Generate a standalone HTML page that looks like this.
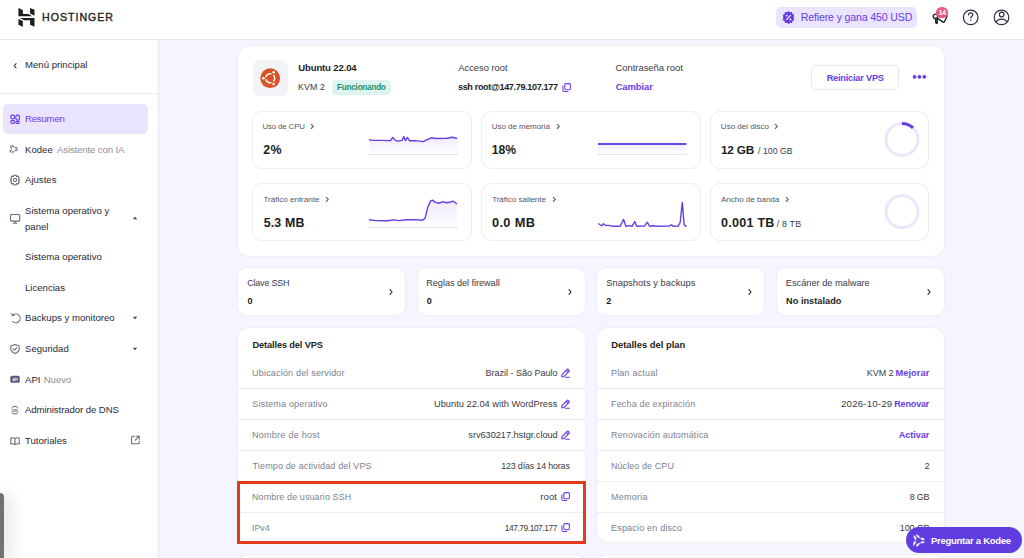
<!DOCTYPE html>
<html><head><meta charset="utf-8">
<style>
*{margin:0;padding:0;box-sizing:border-box}
html,body{width:1024px;height:558px;overflow:hidden;background:#f4f5ff;font-family:"Liberation Sans",sans-serif;color:#1d1e20}
.a{position:absolute;white-space:nowrap}
.ic{position:absolute}
#hdr{position:absolute;left:0;top:0;width:1024px;height:40px;background:#fff;border-bottom:1px solid #e9e9ef}
#side{position:absolute;left:0;top:40px;width:159px;height:518px;background:#fff;border-right:1px solid #e6e6f2}
.si{position:absolute;left:25px;font-size:9.6px;color:#2b2a36;line-height:12px;white-space:nowrap}
.card{position:absolute;background:#fff;border-radius:12px;border:1px solid #eeeef6}
.mc{position:absolute;background:#fff;border:1px solid #ededf2;border-radius:10px}
</style></head><body>
<div id="hdr"></div>
<svg class="ic" style="left:0;top:0" width="40" height="40" viewBox="0 0 40 40">
    <polygon fill="#1d1e20" points="18.4,8 22.85,10.06 22.85,14.02 28.68,14.02 32.17,16.35 18.4,16.35"/>
    <polygon fill="#1d1e20" points="30.08,8 34.5,9.82 34.5,15.65 30.08,13.55"/>
    <polygon fill="#1d1e20" points="20.06,17.98 34.5,17.98 34.5,26.83 30.08,24.74 30.08,20.31 24.02,20.31"/>
    <polygon fill="#1d1e20" points="18.43,18.91 22.85,21 22.85,26.83 18.43,24.74"/>
  </svg>
<div class="a" id="logo" style="left:41.8px;top:11.1px;font-size:11.8px;line-height:12px;letter-spacing:1.1px;color:#1d1e20;-webkit-text-stroke:0.4px #1d1e20;transform:scaleX(0.9);transform-origin:0 0">HOSTINGER</div>
<div class="a" style="left:776px;top:7px;width:141px;height:20.5px;background:#ebe4ff;border-radius:5px"></div>
<svg class="ic" style="left:781px;top:10px" width="15" height="15" viewBox="0 0 15 15">
    <path fill="#673de6" d="M7.5 1 L9 2.3 L11 2 L11.5 4 L13.3 5 L12.6 7.5 L13.3 10 L11.5 11 L11 13 L9 12.7 L7.5 14 L6 12.7 L4 13 L3.5 11 L1.7 10 L2.4 7.5 L1.7 5 L3.5 4 L4 2 L6 2.3 Z"/>
    <path stroke="#fff" stroke-width="1.1" d="M5.3 9.8 L9.7 5.2"/>
    <circle cx="5.6" cy="5.6" r="0.9" fill="#fff"/><circle cx="9.4" cy="9.4" r="0.9" fill="#fff"/>
  </svg>
<div class="a" style="left:800.85px;top:9.80px;font-size:10.65px;line-height:15px;letter-spacing:-0.184px;color:#673de6;font-weight:normal;">Refiere y gana 450 USD</div>
<svg class="ic" style="left:928px;top:5px" width="22" height="22" viewBox="928 5 22 22">
    <g fill="none" stroke="#26252f" stroke-width="1.45" stroke-linejoin="round" stroke-linecap="round">
    <rect x="933.3" y="14.1" width="4.3" height="4.4" rx="2"/>
    <path d="M937.6 14.6 L946.6 10.8 L946.8 17 L944.2 22 Q943.8 22.6 943.1 22.2 L937.6 18.3"/>
    <path d="M935.6 18.6 L935.8 22.6 Q935.9 23.4 936.6 23.4 Q937.3 23.4 937.3 22.6 L937.2 18.8"/>
    </g>
  </svg>
  <div class="a" style="left:936.3px;top:6.7px;width:11.8px;height:11.8px;border-radius:6px;background:#ea5a84"></div>
  <div class="a" style="left:936.3px;top:6.7px;width:11.8px;height:11.8px;color:#fff;font-size:6.8px;font-weight:bold;text-align:center;line-height:12px;letter-spacing:-0.3px">14</div>
  <svg class="ic" style="left:960px;top:6px" width="22" height="22" viewBox="960 6 22 22">
    <circle cx="970.7" cy="17.4" r="7.3" fill="none" stroke="#2f2e45" stroke-width="1.2"/>
    <path fill="none" stroke="#2f2e45" stroke-width="1.2" stroke-linecap="round" d="M968.6 15 C968.6 13.6 969.5 12.9 970.7 12.9 C971.9 12.9 972.8 13.7 972.8 14.8 C972.8 16.2 970.8 16.3 970.8 18"/>
    <circle cx="970.8" cy="20.3" r="0.75" fill="#2f2e45"/>
  </svg>
  <svg class="ic" style="left:991px;top:6px" width="22" height="22" viewBox="991 6 22 22">
    <defs><clipPath id="acc"><circle cx="1001.5" cy="17.4" r="7.3"/></clipPath></defs>
    <circle cx="1001.5" cy="17.4" r="7.3" fill="none" stroke="#2f2e45" stroke-width="1.2"/>
    <circle cx="1001.7" cy="14.5" r="2.3" fill="none" stroke="#2f2e45" stroke-width="1.2"/>
    <path clip-path="url(#acc)" fill="none" stroke="#2f2e45" stroke-width="1.2" d="M995.5 23.5 C996.5 20.5 999 19.1 1001.6 19.1 C1004.2 19.1 1006.7 20.5 1007.7 23.5"/>
  </svg>
<div id="side">
  <svg class="ic" style="left:12px;top:21.5px" width="6" height="8" viewBox="0 0 6 8"><path fill="none" stroke="#36344d" stroke-width="1.05" stroke-linecap="round" stroke-linejoin="round" d="M4.1 1.6 L2.2 3.8 L4.1 6"/></svg>
  <div class="si" style="top:19px">Menú principal</div>
  <div class="a" style="left:0;top:53px;width:158px;height:1px;background:#ececf1"></div>
  <div class="a" style="left:3px;top:64px;width:145px;height:30px;background:#ebe4ff;border-radius:5px"></div>
  <svg class="ic" style="left:0;top:64px" width="30" height="30" viewBox="0 104 30 30">
    <g fill="none" stroke="#673de6" stroke-width="1.15">
    <rect x="10.8" y="115.1" width="3.7" height="3.7" rx="1.3"/>
    <rect x="15.9" y="115.1" width="3.5" height="5" rx="1.3"/>
    <rect x="10.8" y="120.3" width="3.7" height="3.1" rx="1.5"/>
    <rect x="15.9" y="121.5" width="3.5" height="1.9" rx="0.9"/>
    </g>
  </svg>
  <div class="si" style="top:73px;color:#673de6;letter-spacing:-0.2px">Resumen</div>

  <!-- kodee -->
  <svg class="ic" style="left:0;top:104px" width="30" height="30" viewBox="0 144 30 30">
    <path transform="translate(10 144.7) scale(0.7) translate(-913.6 -534.3)" fill="#66667a" stroke="#66667a" stroke-width="0.4" d="M913.60 535.40 Q913.57 538.40 915.90 540.30 Q917.01 536.79 913.60 535.40Z M915.90 540.80 Q912.49 542.19 913.60 545.70 Q915.93 543.80 915.90 540.80Z M916.20 534.30 Q916.36 537.94 920.00 538.00 Q919.01 535.22 916.20 534.30Z M920.30 538.20 Q921.97 541.04 924.70 539.20 Q922.81 537.33 920.30 538.20Z M916.20 546.80 Q919.01 545.88 920.00 543.10 Q916.36 543.16 916.20 546.80Z M920.30 542.90 Q922.81 543.77 924.70 541.90 Q921.97 540.06 920.30 542.90Z"/>
  </svg>
  <div class="si" style="top:104px">Kodee <span style="color:#8e8fa1;margin-left:1.5px;letter-spacing:-0.12px">Asistente con IA</span></div>
  <!-- gear -->
  <svg class="ic" style="left:0;top:125px" width="30" height="30" viewBox="0 165 30 30">
    <g fill="none" stroke="#66667a" stroke-width="1.05" stroke-linejoin="round">
    <path d="M13.9 175.3 L16.1 175.3 L16.6 176.7 L17.9 176.1 L19.2 177.8 L18.3 178.9 L19.6 180.1 L18.3 181.3 L19.2 182.4 L17.9 184.1 L16.6 183.5 L16.1 184.9 L13.9 184.9 L13.4 183.5 L12.1 184.1 L10.8 182.4 L11.7 181.3 L10.4 180.1 L11.7 178.9 L10.8 177.8 L12.1 176.1 L13.4 176.7 Z"/>
    <circle cx="15" cy="180.1" r="1.6"/>
    </g>
  </svg>
  <div class="si" style="top:134px">Ajustes</div>
  <!-- monitor -->
  <svg class="ic" style="left:0;top:165px" width="30" height="30" viewBox="0 205 30 30">
    <g fill="none" stroke="#66667a" stroke-width="1.05">
    <rect x="10.5" y="214.5" width="9.2" height="6.6" rx="1"/>
    <path d="M15.1 221.2 L15.1 223 M12.8 223.2 L17.4 223.2"/>
    </g>
  </svg>
  <div class="si" style="top:163.3px;line-height:15.3px">Sistema operativo y<br>panel</div>
  <svg class="ic" style="left:132px;top:176px" width="6" height="4" viewBox="0 0 6 4"><path fill="#4a4a5c" d="M0.7 3.3 L3 0.7 L5.3 3.3 Z"/></svg>
  <div class="si" style="top:211px">Sistema operativo</div>
  <div class="si" style="top:242px">Licencias</div>
  <!-- backups -->
  <svg class="ic" style="left:0;top:265px" width="30" height="30" viewBox="0 305 30 30">
    <g fill="none" stroke="#66667a" stroke-width="1.05" stroke-linecap="round" stroke-linejoin="round">
    <path d="M12.6 315.2 A4.4 4.4 0 1 1 12.8 321.6"/>
    <path d="M11.6 313.6 L12.4 315.6 L14.5 315.2"/>
    </g>
  </svg>
  <div class="si" style="top:272px">Backups y monitoreo</div>
  <svg class="ic" style="left:132px;top:276px" width="6" height="4" viewBox="0 0 6 4"><path fill="#4a4a5c" d="M0.7 0.7 L3 3.3 L5.3 0.7 Z"/></svg>
  <!-- shield -->
  <svg class="ic" style="left:0;top:295px" width="30" height="30" viewBox="0 335 30 30">
    <g fill="none" stroke="#66667a" stroke-width="1.05" stroke-linejoin="round" stroke-linecap="round">
    <path d="M15 344.4 L19.2 345.9 L19.2 348.6 C19.2 351 17.4 352.6 15 353.4 C12.6 352.6 10.8 351 10.8 348.6 L10.8 345.9 Z"/>
    <path d="M13.2 348.9 L14.5 350.1 L16.8 347.6"/>
    </g>
  </svg>
  <div class="si" style="top:303px">Seguridad</div>
  <svg class="ic" style="left:132px;top:307px" width="6" height="4" viewBox="0 0 6 4"><path fill="#4a4a5c" d="M0.7 0.7 L3 3.3 L5.3 0.7 Z"/></svg>
  <!-- api -->
  <svg class="ic" style="left:0;top:325px" width="30" height="30" viewBox="0 365 30 30">
    <rect x="10.3" y="375.8" width="9.5" height="7" rx="1.6" fill="#5e5f76"/>
    <text x="15.05" y="380.6" font-size="3.2" font-family="Liberation Sans" font-weight="bold" fill="#fff" text-anchor="middle">API</text>
  </svg>
  <div class="si" style="top:334px">API <span style="color:#8b8c9c;margin-left:0.5px">Nuevo</span></div>
  <!-- dns -->
  <svg class="ic" style="left:0;top:355px" width="30" height="30" viewBox="0 395 30 30">
    <g fill="none" stroke="#66667a" stroke-width="1">
    <path d="M11.6 408.2 A3.9 3.9 0 0 1 18.2 408.2 M11.6 412.2 A3.9 3.9 0 0 0 18.2 412.2"/>
    </g>
    <text x="14.9" y="411.6" font-size="3" font-family="Liberation Sans" font-weight="bold" fill="#66667a" text-anchor="middle">DNS</text>
  </svg>
  <div class="si" style="top:364px;letter-spacing:-0.08px">Administrador de DNS</div>
  <!-- book -->
  <svg class="ic" style="left:0;top:385px" width="30" height="30" viewBox="0 425 30 30">
    <path fill="none" stroke="#66667a" stroke-width="1.05" stroke-linejoin="round" d="M15 438.6 C13.8 437.8 12.2 437.6 10.8 437.9 L10.8 444 C12.2 443.7 13.8 443.9 15 444.6 C16.2 443.9 17.8 443.7 19.2 444 L19.2 437.9 C17.8 437.6 16.2 437.8 15 438.6 Z M15 438.6 L15 444.6"/>
  </svg>
  <div class="si" style="top:395px">Tutoriales</div>
  <svg class="ic" style="left:125px;top:390px" width="20" height="20" viewBox="125 430 20 20">
    <path fill="none" stroke="#66667a" stroke-width="1.05" stroke-linecap="round" stroke-linejoin="round" d="M134.3 436.2 L132.6 436.2 Q131.6 436.2 131.6 437.2 L131.6 442.8 Q131.6 443.8 132.6 443.8 L138.2 443.8 Q139.2 443.8 139.2 442.8 L139.2 441.1 M136.1 436.2 L139.2 436.2 L139.2 439.3 M139.2 436.2 L135.3 440.1"/>
  </svg>
</div>
<div class="a" style="left:0;top:493px;width:4px;height:65px;background:#727272;border-radius:0 5px 0 0;box-shadow:3px 2px 16px rgba(0,0,0,0.32)"></div>



<div class="card" style="left:237px;top:44.5px;width:708px;height:212px"></div>
<div class="a" style="left:252.5px;top:59.5px;width:35.5px;height:36px;background:#f2f3f6;border-radius:7px"></div>
<svg class="ic" style="left:259px;top:66.5px" width="22" height="22" viewBox="0 0 22 22">
  <circle cx="11.2" cy="11.2" r="9.9" fill="#dc5126"/>
  <circle cx="11.2" cy="11.2" r="4.5" fill="none" stroke="#fff" stroke-width="1.45" stroke-dasharray="3.5 2.1 7.1 2.1 7.1 2.1 3.6 0"/>
  <circle cx="4.4" cy="11.2" r="1.3" fill="#fff"/>
  <circle cx="14.6" cy="5.3" r="1.3" fill="#fff"/>
  <circle cx="14.6" cy="17.1" r="1.3" fill="#fff"/>
</svg>
<div class="a" style="left:298.22px;top:60.90px;font-size:9.59px;line-height:13px;letter-spacing:-0.151px;color:#1d1e20;font-weight:bold;">Ubuntu 22.04</div>
<div class="a" style="left:298.10px;top:80.91px;font-size:8.80px;line-height:12px;letter-spacing:0.075px;color:#3a3a44;font-weight:normal;">KVM 2</div>
<div class="a" style="left:332.3px;top:79.5px;width:58.7px;height:15.2px;background:#def4f0;border-radius:4px"></div>
<div class="a" style="left:337.11px;top:81.91px;font-size:8.16px;line-height:11px;letter-spacing:-0.245px;color:#1f8f6c;font-weight:bold;">Funcionando</div>
<div class="a" style="left:458.25px;top:60.92px;font-size:9.40px;line-height:13px;letter-spacing:-0.013px;color:#3a3a44;font-weight:normal;">Acceso root</div>
<div class="a" style="left:457.98px;top:80.91px;font-size:9.07px;line-height:13px;letter-spacing:-0.346px;color:#1d1e20;font-weight:bold;">ssh root@147.79.107.177</div>
<svg class="ic" style="left:561.5px;top:83px" width="9" height="9" viewBox="0 0 9 9">
  <rect x="2.8" y="0.6" width="5.6" height="6.2" rx="1.2" fill="none" stroke="#673de6" stroke-width="1.05"/>
  <path fill="none" stroke="#673de6" stroke-width="1.05" d="M0.9 2.6 L0.9 7 Q0.9 8.4 2.3 8.4 L6.2 8.4"/>
</svg>
<div class="a" style="left:615.53px;top:60.91px;font-size:9.48px;line-height:13px;letter-spacing:-0.044px;color:#3a3a44;font-weight:normal;">Contraseña root</div>
<div class="a" style="left:615.63px;top:80.91px;font-size:9.37px;line-height:13px;letter-spacing:-0.036px;color:#673de6;font-weight:bold;">Cambiar</div>
<div class="a" style="left:811.3px;top:65.3px;width:87.6px;height:25.2px;border:1px solid #e6e6ee;border-radius:5px"></div>
<div class="a" style="left:826.64px;top:71.90px;font-size:9.27px;line-height:13px;letter-spacing:-0.238px;color:#673de6;font-weight:bold;">Reiniciar VPS</div>
<svg class="ic" style="left:911px;top:74px" width="17" height="6" viewBox="0 0 17 6">
  <circle cx="3.6" cy="2.8" r="1.9" fill="#673de6"/><circle cx="8.45" cy="2.8" r="1.9" fill="#673de6"/><circle cx="13.3" cy="2.8" r="1.9" fill="#673de6"/>
</svg>
<div class="mc" style="left:252px;top:110.8px;width:220px;height:57.8px"></div>
<div class="mc" style="left:252px;top:183.2px;width:220px;height:58.2px"></div>
<div class="mc" style="left:481.3px;top:110.8px;width:219.5px;height:57.8px"></div>
<div class="mc" style="left:481.3px;top:183.2px;width:219.5px;height:58.2px"></div>
<div class="mc" style="left:710.3px;top:110.8px;width:219.2px;height:57.8px"></div>
<div class="mc" style="left:710.3px;top:183.2px;width:219.2px;height:58.2px"></div>
<div class="a" style="left:262.55px;top:121.20px;font-size:7.87px;line-height:11px;letter-spacing:-0.147px;color:#55555f;font-weight:normal;">Uso de CPU</div>
<svg class="ic" style="left:310px;top:122.9px" width="5" height="7" viewBox="0 0 5 7"><path fill="none" stroke="#5f6072" stroke-width="1.1" stroke-linecap="round" stroke-linejoin="round" d="M1.3 1.3 L3.4 3.4 L1.3 5.5"/></svg>
<div class="a" style="left:491.74px;top:121.21px;font-size:8.03px;line-height:11px;letter-spacing:-0.050px;color:#55555f;font-weight:normal;">Uso de memoria</div>
<svg class="ic" style="left:555.5px;top:122.9px" width="5" height="7" viewBox="0 0 5 7"><path fill="none" stroke="#5f6072" stroke-width="1.1" stroke-linecap="round" stroke-linejoin="round" d="M1.3 1.3 L3.4 3.4 L1.3 5.5"/></svg>
<div class="a" style="left:720.84px;top:121.21px;font-size:8.07px;line-height:11px;letter-spacing:-0.023px;color:#55555f;font-weight:normal;">Uso del disco</div>
<svg class="ic" style="left:774.2px;top:122.9px" width="5" height="7" viewBox="0 0 5 7"><path fill="none" stroke="#5f6072" stroke-width="1.1" stroke-linecap="round" stroke-linejoin="round" d="M1.3 1.3 L3.4 3.4 L1.3 5.5"/></svg>
<div class="a" style="left:263.44px;top:194.01px;font-size:8.08px;line-height:11px;letter-spacing:-0.016px;color:#55555f;font-weight:normal;">Tráfico entrante</div>
<svg class="ic" style="left:325px;top:195.7px" width="5" height="7" viewBox="0 0 5 7"><path fill="none" stroke="#5f6072" stroke-width="1.1" stroke-linecap="round" stroke-linejoin="round" d="M1.3 1.3 L3.4 3.4 L1.3 5.5"/></svg>
<div class="a" style="left:492.14px;top:194.01px;font-size:8.06px;line-height:11px;letter-spacing:-0.026px;color:#55555f;font-weight:normal;">Tráfico saliente</div>
<svg class="ic" style="left:551.5px;top:195.7px" width="5" height="7" viewBox="0 0 5 7"><path fill="none" stroke="#5f6072" stroke-width="1.1" stroke-linecap="round" stroke-linejoin="round" d="M1.3 1.3 L3.4 3.4 L1.3 5.5"/></svg>
<div class="a" style="left:720.90px;top:194.01px;font-size:8.07px;line-height:11px;letter-spacing:-0.025px;color:#55555f;font-weight:normal;">Ancho de banda</div>
<svg class="ic" style="left:785.3px;top:195.7px" width="5" height="7" viewBox="0 0 5 7"><path fill="none" stroke="#5f6072" stroke-width="1.1" stroke-linecap="round" stroke-linejoin="round" d="M1.3 1.3 L3.4 3.4 L1.3 5.5"/></svg>
<div class="a" style="left:263.23px;top:141.71px;font-size:12.43px;line-height:17px;letter-spacing:0.352px;color:#1d1e20;font-weight:bold;">2%</div>
<div class="a" style="left:491.77px;top:141.71px;font-size:12.17px;line-height:17px;letter-spacing:-0.000px;color:#1d1e20;font-weight:bold;">18%</div>
<div class="a" style="left:720.99px;top:141.71px;font-size:11.83px;line-height:17px;letter-spacing:-0.243px;color:#1d1e20;font-weight:bold;">12 GB</div>
<div class="a" style="left:758.00px;top:144.70px;font-size:8.67px;line-height:12px;letter-spacing:0.068px;color:#3a3a44;font-weight:normal;">/ 100 GB</div>
<div class="a" style="left:263.73px;top:214.71px;font-size:12.40px;line-height:17px;letter-spacing:0.144px;color:#1d1e20;font-weight:bold;">5.3 MB</div>
<div class="a" style="left:491.92px;top:213.70px;font-size:12.78px;line-height:18px;letter-spacing:0.384px;color:#1d1e20;font-weight:bold;">0.0 MB</div>
<div class="a" style="left:721.12px;top:213.71px;font-size:12.57px;line-height:18px;letter-spacing:0.229px;color:#1d1e20;font-weight:bold;">0.001 TB</div>
<div class="a" style="left:776.80px;top:217.70px;font-size:8.87px;line-height:12px;letter-spacing:0.169px;color:#3a3a44;font-weight:normal;">/ 8 TB</div>
<svg class="ic" style="left:0;top:0" width="1024" height="558" viewBox="0 0 1024 558">
  <defs>
    <linearGradient id="gf" x1="0" y1="0" x2="0" y2="1">
      <stop offset="0" stop-color="#eeeafd"/><stop offset="1" stop-color="#fefeff"/>
    </linearGradient>
  </defs>
  <!-- CPU -->
  <path fill="url(#gf)" d="M369 139.6 L372.3 140.4 L380.5 140.4 L390.3 140.6 L392.8 137.5 L395.4 140.4 L397.4 141.1 L402 140.4 L403.9 136.5 L405.4 140.7 L407.4 137.3 L409.4 140.7 L415.4 140.6 L423.1 141.6 L426.7 139.9 L431.3 137.8 L435.9 138.5 L447.2 138.3 L452.3 137.3 L457.2 138.5 L457.2 154 L369 154 Z"/>
  <path fill="none" stroke="#673de6" stroke-width="1.4" stroke-linejoin="round" d="M369 139.6 L372.3 140.4 L380.5 140.4 L390.3 140.6 L392.8 137.5 L395.4 140.4 L397.4 141.1 L402 140.4 L403.9 136.5 L405.4 140.7 L407.4 137.3 L409.4 140.7 L415.4 140.6 L423.1 141.6 L426.7 139.9 L431.3 137.8 L435.9 138.5 L447.2 138.3 L452.3 137.3 L457.2 138.5"/>
  <path stroke="#e2e4f0" stroke-width="1" d="M368 154.5 L458 154.5"/>
  <!-- MEM -->
  <path fill="url(#gf)" d="M598 144 L686.5 144 L686.5 154 L598 154 Z"/>
  <path fill="none" stroke="#6a45e6" stroke-width="1.8" d="M598 144 L686.5 144"/>
  <path stroke="#e2e4f0" stroke-width="1" d="M597.5 154.5 L687 154.5"/>
  <!-- TRAFFIC IN -->
  <path fill="url(#gf)" d="M369 219.8 L376.4 220.6 L387.7 220.8 L393.8 219.9 L399 220.6 L406.1 219.8 L415.4 219.6 L422.5 220.3 L425.1 218.1 L427.7 207.3 L430.8 200.6 L432.8 200.3 L435.4 202.4 L439.5 203.2 L442.5 201.7 L446.6 202.7 L450.8 202 L453.3 201.2 L456.9 204 L456.9 227 L369 227 Z"/>
  <path fill="none" stroke="#673de6" stroke-width="1.4" stroke-linejoin="round" d="M369 219.8 L376.4 220.6 L387.7 220.8 L393.8 219.9 L399 220.6 L406.1 219.8 L415.4 219.6 L422.5 220.3 L425.1 218.1 L427.7 207.3 L430.8 200.6 L432.8 200.3 L435.4 202.4 L439.5 203.2 L442.5 201.7 L446.6 202.7 L450.8 202 L453.3 201.2 L456.9 204"/>
  <path stroke="#e2e4f0" stroke-width="1" d="M368 227.5 L458 227.5"/>
  <!-- TRAFFIC OUT -->
  <path fill="none" stroke="#673de6" stroke-width="1.4" stroke-linejoin="round" d="M598.2 223.5 L601.5 225.8 L603.5 223.7 L605.4 225.2 L610.5 225.6 L612.6 226.3 L620.2 226.3 L623.6 219.4 L625.9 226.3 L629.5 225.6 L632 226.3 L634.8 221.5 L636.7 226.3 L644.3 226.1 L647.4 222.2 L649.5 226.3 L652.6 225.8 L656.7 226.3 L669 226.1 L671.3 224.9 L673.6 226.3 L678.2 226.1 L680.2 222.2 L682.3 202.4 L684.1 224.7 L686.4 226.6"/>
  <!-- donuts -->
  <circle cx="902" cy="139.5" r="16" fill="none" stroke="#ebe6fc" stroke-width="3"/>
  <circle cx="902" cy="139.5" r="16" fill="none" stroke="#673de6" stroke-width="3" stroke-dasharray="12.1 100" transform="rotate(-90 902 139.5)"/>
  <circle cx="902" cy="211.7" r="16" fill="none" stroke="#ebe6fc" stroke-width="3"/>
</svg>
<div class="card" style="left:237px;top:267.3px;width:169px;height:48.4px;border-radius:10px"></div>
<div class="card" style="left:417px;top:267.3px;width:169px;height:48.4px;border-radius:10px"></div>
<div class="card" style="left:596.3px;top:267.3px;width:169px;height:48.4px;border-radius:10px"></div>
<div class="card" style="left:776px;top:267.3px;width:169px;height:48.4px;border-radius:10px"></div>
<div class="a" style="left:247.25px;top:276.90px;font-size:8.96px;line-height:13px;letter-spacing:-0.189px;color:#3a3a44;font-weight:normal;">Clave SSH</div>
<div class="a" style="left:247.43px;top:294.81px;font-size:9.13px;line-height:13px;letter-spacing:1.226px;color:#1d1e20;font-weight:bold;">0</div>
<div class="a" style="left:426.27px;top:276.90px;font-size:9.17px;line-height:13px;letter-spacing:-0.049px;color:#3a3a44;font-weight:normal;">Reglas del firewall</div>
<div class="a" style="left:426.73px;top:294.81px;font-size:9.13px;line-height:13px;letter-spacing:1.226px;color:#1d1e20;font-weight:bold;">0</div>
<div class="a" style="left:606.23px;top:276.91px;font-size:9.33px;line-height:13px;letter-spacing:0.030px;color:#3a3a44;font-weight:normal;">Snapshots y backups</div>
<div class="a" style="left:606.33px;top:294.81px;font-size:9.13px;line-height:13px;letter-spacing:1.026px;color:#1d1e20;font-weight:bold;">2</div>
<div class="a" style="left:785.86px;top:276.91px;font-size:9.24px;line-height:13px;letter-spacing:-0.020px;color:#3a3a44;font-weight:normal;">Escáner de malware</div>
<div class="a" style="left:786.05px;top:294.81px;font-size:9.18px;line-height:13px;letter-spacing:0.029px;color:#1d1e20;font-weight:bold;">No instalado</div>
<svg class="ic" style="left:387.5px;top:287.5px" width="6" height="8" viewBox="0 0 6 8"><path fill="none" stroke="#1d1e20" stroke-width="1.05" stroke-linecap="round" stroke-linejoin="round" d="M2 1.6 L4.1 4 L2 6.4"/></svg>
<svg class="ic" style="left:567px;top:287.5px" width="6" height="8" viewBox="0 0 6 8"><path fill="none" stroke="#1d1e20" stroke-width="1.05" stroke-linecap="round" stroke-linejoin="round" d="M2 1.6 L4.1 4 L2 6.4"/></svg>
<svg class="ic" style="left:746.5px;top:287.5px" width="6" height="8" viewBox="0 0 6 8"><path fill="none" stroke="#1d1e20" stroke-width="1.05" stroke-linecap="round" stroke-linejoin="round" d="M2 1.6 L4.1 4 L2 6.4"/></svg>
<svg class="ic" style="left:926px;top:287.5px" width="6" height="8" viewBox="0 0 6 8"><path fill="none" stroke="#1d1e20" stroke-width="1.05" stroke-linecap="round" stroke-linejoin="round" d="M2 1.6 L4.1 4 L2 6.4"/></svg>
<div class="card" style="left:237px;top:326.6px;width:349px;height:216.4px"></div>
<div class="card" style="left:596.3px;top:326.6px;width:348.7px;height:216px"></div>
<div class="card" style="left:237px;top:553.5px;width:349px;height:40px"></div>
<div class="card" style="left:596.3px;top:553.5px;width:348.7px;height:40px"></div>
<div class="a" style="left:252.55px;top:338.91px;font-size:9.20px;line-height:13px;letter-spacing:-0.114px;color:#1d1e20;font-weight:bold;">Detalles del VPS</div>
<div class="a" style="left:611.14px;top:337.91px;font-size:9.41px;line-height:13px;letter-spacing:-0.006px;color:#1d1e20;font-weight:bold;">Detalles del plan</div>
<div class="a" style="left:237.5px;top:388px;width:348px;height:1px;background:#ededf3"></div>
<div class="a" style="left:596.5px;top:388px;width:348.2px;height:1px;background:#ededf3"></div>
<div class="a" style="left:237.5px;top:419px;width:348px;height:1px;background:#ededf3"></div>
<div class="a" style="left:596.5px;top:419px;width:348.2px;height:1px;background:#ededf3"></div>
<div class="a" style="left:237.5px;top:450px;width:348px;height:1px;background:#ededf3"></div>
<div class="a" style="left:596.5px;top:450px;width:348.2px;height:1px;background:#ededf3"></div>
<div class="a" style="left:237.5px;top:481px;width:348px;height:1px;background:#ededf3"></div>
<div class="a" style="left:596.5px;top:481px;width:348.2px;height:1px;background:#ededf3"></div>
<div class="a" style="left:237.5px;top:512px;width:348px;height:1px;background:#ededf3"></div>
<div class="a" style="left:596.5px;top:512px;width:348.2px;height:1px;background:#ededf3"></div>
<div class="a" style="left:252.07px;top:366.91px;font-size:9.05px;line-height:13px;letter-spacing:0.166px;color:#7c7f90;font-weight:normal;">Ubicación del servidor</div>
<div class="a" style="left:252.34px;top:397.90px;font-size:9.05px;line-height:13px;letter-spacing:0.174px;color:#7c7f90;font-weight:normal;">Sistema operativo</div>
<div class="a" style="left:251.97px;top:428.90px;font-size:9.10px;line-height:13px;letter-spacing:0.220px;color:#7c7f90;font-weight:normal;">Nombre de host</div>
<div class="a" style="left:252.52px;top:459.91px;font-size:9.00px;line-height:13px;letter-spacing:0.147px;color:#7c7f90;font-weight:normal;">Tiempo de actividad del VPS</div>
<div class="a" style="left:251.99px;top:490.91px;font-size:8.93px;line-height:12px;letter-spacing:0.124px;color:#7c7f90;font-weight:normal;">Nombre de usuario SSH</div>
<div class="a" style="left:251.91px;top:521.90px;font-size:8.78px;line-height:12px;letter-spacing:0.052px;color:#7c7f90;font-weight:normal;">IPv4</div>
<div class="a" style="left:610.98px;top:366.91px;font-size:9.05px;line-height:13px;letter-spacing:0.171px;color:#7c7f90;font-weight:normal;">Plan actual</div>
<div class="a" style="left:610.98px;top:397.90px;font-size:9.03px;line-height:13px;letter-spacing:0.166px;color:#7c7f90;font-weight:normal;">Fecha de expiración</div>
<div class="a" style="left:610.98px;top:428.91px;font-size:9.01px;line-height:13px;letter-spacing:0.165px;color:#7c7f90;font-weight:normal;">Renovación automática</div>
<div class="a" style="left:610.99px;top:459.91px;font-size:8.91px;line-height:12px;letter-spacing:0.120px;color:#7c7f90;font-weight:normal;">Núcleo de CPU</div>
<div class="a" style="left:610.97px;top:490.91px;font-size:9.07px;line-height:13px;letter-spacing:0.237px;color:#7c7f90;font-weight:normal;">Memoria</div>
<div class="a" style="left:610.98px;top:521.91px;font-size:9.05px;line-height:13px;letter-spacing:0.176px;color:#7c7f90;font-weight:normal;">Espacio en disco</div>
<div class="a" style="left:485.57px;top:366.91px;font-size:9.13px;line-height:13px;letter-spacing:-0.067px;color:#3a3a44;font-weight:normal;">Brazil - São Paulo</div>
<svg class="ic" style="left:560.5px;top:367.9px" width="10" height="10" viewBox="0 0 10 10"><path fill="none" stroke="#673de6" stroke-width="1.15" stroke-linejoin="round" stroke-linecap="round" d="M0.7 8.7 L1 6.7 L6.1 1.5 Q6.7 0.9 7.3 1.5 L8 2.2 Q8.6 2.8 8 3.4 L2.9 8.6 Z M5.3 2.3 L7.2 4.2 M4.6 9.2 L8.4 9.2"/></svg>
<div class="a" style="left:433.95px;top:397.91px;font-size:9.29px;line-height:13px;letter-spacing:0.009px;color:#3a3a44;font-weight:normal;">Ubuntu 22.04 with WordPress</div>
<svg class="ic" style="left:560.5px;top:398.9px" width="10" height="10" viewBox="0 0 10 10"><path fill="none" stroke="#673de6" stroke-width="1.15" stroke-linejoin="round" stroke-linecap="round" d="M0.7 8.7 L1 6.7 L6.1 1.5 Q6.7 0.9 7.3 1.5 L8 2.2 Q8.6 2.8 8 3.4 L2.9 8.6 Z M5.3 2.3 L7.2 4.2 M4.6 9.2 L8.4 9.2"/></svg>
<div class="a" style="left:468.32px;top:428.91px;font-size:9.21px;line-height:13px;letter-spacing:-0.034px;color:#3a3a44;font-weight:normal;">srv630217.hstgr.cloud</div>
<svg class="ic" style="left:560.5px;top:429.9px" width="10" height="10" viewBox="0 0 10 10"><path fill="none" stroke="#673de6" stroke-width="1.15" stroke-linejoin="round" stroke-linecap="round" d="M0.7 8.7 L1 6.7 L6.1 1.5 Q6.7 0.9 7.3 1.5 L8 2.2 Q8.6 2.8 8 3.4 L2.9 8.6 Z M5.3 2.3 L7.2 4.2 M4.6 9.2 L8.4 9.2"/></svg>
<div class="a" style="left:501.17px;top:459.91px;font-size:8.93px;line-height:13px;letter-spacing:-0.170px;color:#3a3a44;font-weight:normal;">123 días 14 horas</div>
<div class="a" style="left:540.23px;top:489.90px;font-size:9.50px;line-height:13px;letter-spacing:0.126px;color:#3a3a44;font-weight:normal;">root</div>
<svg class="ic" style="left:560.6px;top:491.59999999999997px" width="9" height="9" viewBox="0 0 9 9"><rect x="2.8" y="0.6" width="5.6" height="6.2" rx="1.2" fill="none" stroke="#673de6" stroke-width="1.05"/><path fill="none" stroke="#673de6" stroke-width="1.05" d="M0.9 2.6 L0.9 7 Q0.9 8.4 2.3 8.4 L6.2 8.4"/></svg>
<div class="a" style="left:504.81px;top:521.91px;font-size:8.41px;line-height:12px;letter-spacing:-0.454px;color:#3a3a44;font-weight:normal;">147.79.107.177</div>
<svg class="ic" style="left:560.6px;top:522.6px" width="9" height="9" viewBox="0 0 9 9"><rect x="2.8" y="0.6" width="5.6" height="6.2" rx="1.2" fill="none" stroke="#673de6" stroke-width="1.05"/><path fill="none" stroke="#673de6" stroke-width="1.05" d="M0.9 2.6 L0.9 7 Q0.9 8.4 2.3 8.4 L6.2 8.4"/></svg>
<div class="a" style="left:866.87px;top:366.91px;font-size:9.07px;line-height:13px;letter-spacing:-0.146px;color:#3a3a44;font-weight:normal;">KVM 2</div>
<div class="a" style="left:895.44px;top:366.90px;font-size:9.34px;line-height:13px;letter-spacing:0.036px;color:#673de6;font-weight:bold;">Mejorar</div>
<div class="a" style="left:841.02px;top:396.91px;font-size:9.64px;line-height:13px;letter-spacing:0.203px;color:#3a3a44;font-weight:normal;">2026-10-29</div>
<div class="a" style="left:894.26px;top:397.90px;font-size:9.02px;line-height:13px;letter-spacing:-0.164px;color:#673de6;font-weight:bold;">Renovar</div>
<div class="a" style="left:898.72px;top:428.91px;font-size:9.16px;line-height:13px;letter-spacing:-0.065px;color:#673de6;font-weight:bold;">Activar</div>
<div class="a" style="left:924.47px;top:459.90px;font-size:9.28px;line-height:13px;letter-spacing:0.333px;color:#3a3a44;font-weight:normal;">2</div>
<div class="a" style="left:909.84px;top:490.91px;font-size:8.97px;line-height:13px;letter-spacing:-0.222px;color:#3a3a44;font-weight:normal;">8 GB</div>
<div class="a" style="left:899.77px;top:521.90px;font-size:9.04px;line-height:13px;letter-spacing:-0.157px;color:#3a3a44;font-weight:normal;">100 GB</div>
<div class="a" style="left:237.2px;top:481px;width:348.6px;height:63px;border:3.6px solid #e3391d"></div>
<div class="a" style="left:905.7px;top:527.3px;width:116px;height:25.5px;border-radius:13px;background:#5f3de0"></div>
<svg class="ic" style="left:906px;top:528px" width="24" height="24" viewBox="906 528 24 24">
  <path fill="#fff" stroke="#fff" stroke-width="0.3" d="M913.60 535.40 Q913.57 538.40 915.90 540.30 Q917.01 536.79 913.60 535.40Z M915.90 540.80 Q912.49 542.19 913.60 545.70 Q915.93 543.80 915.90 540.80Z M916.20 534.30 Q916.36 537.94 920.00 538.00 Q919.01 535.22 916.20 534.30Z M920.30 538.20 Q921.97 541.04 924.70 539.20 Q922.81 537.33 920.30 538.20Z M916.20 546.80 Q919.01 545.88 920.00 543.10 Q916.36 543.16 916.20 546.80Z M920.30 542.90 Q922.81 543.77 924.70 541.90 Q921.97 540.06 920.30 542.90Z"/>
</svg>
<div class="a" style="left:930.93px;top:533.71px;font-size:9.44px;line-height:13px;letter-spacing:-0.227px;color:#fff;font-weight:bold;">Preguntar a Kodee</div>
</body></html>
